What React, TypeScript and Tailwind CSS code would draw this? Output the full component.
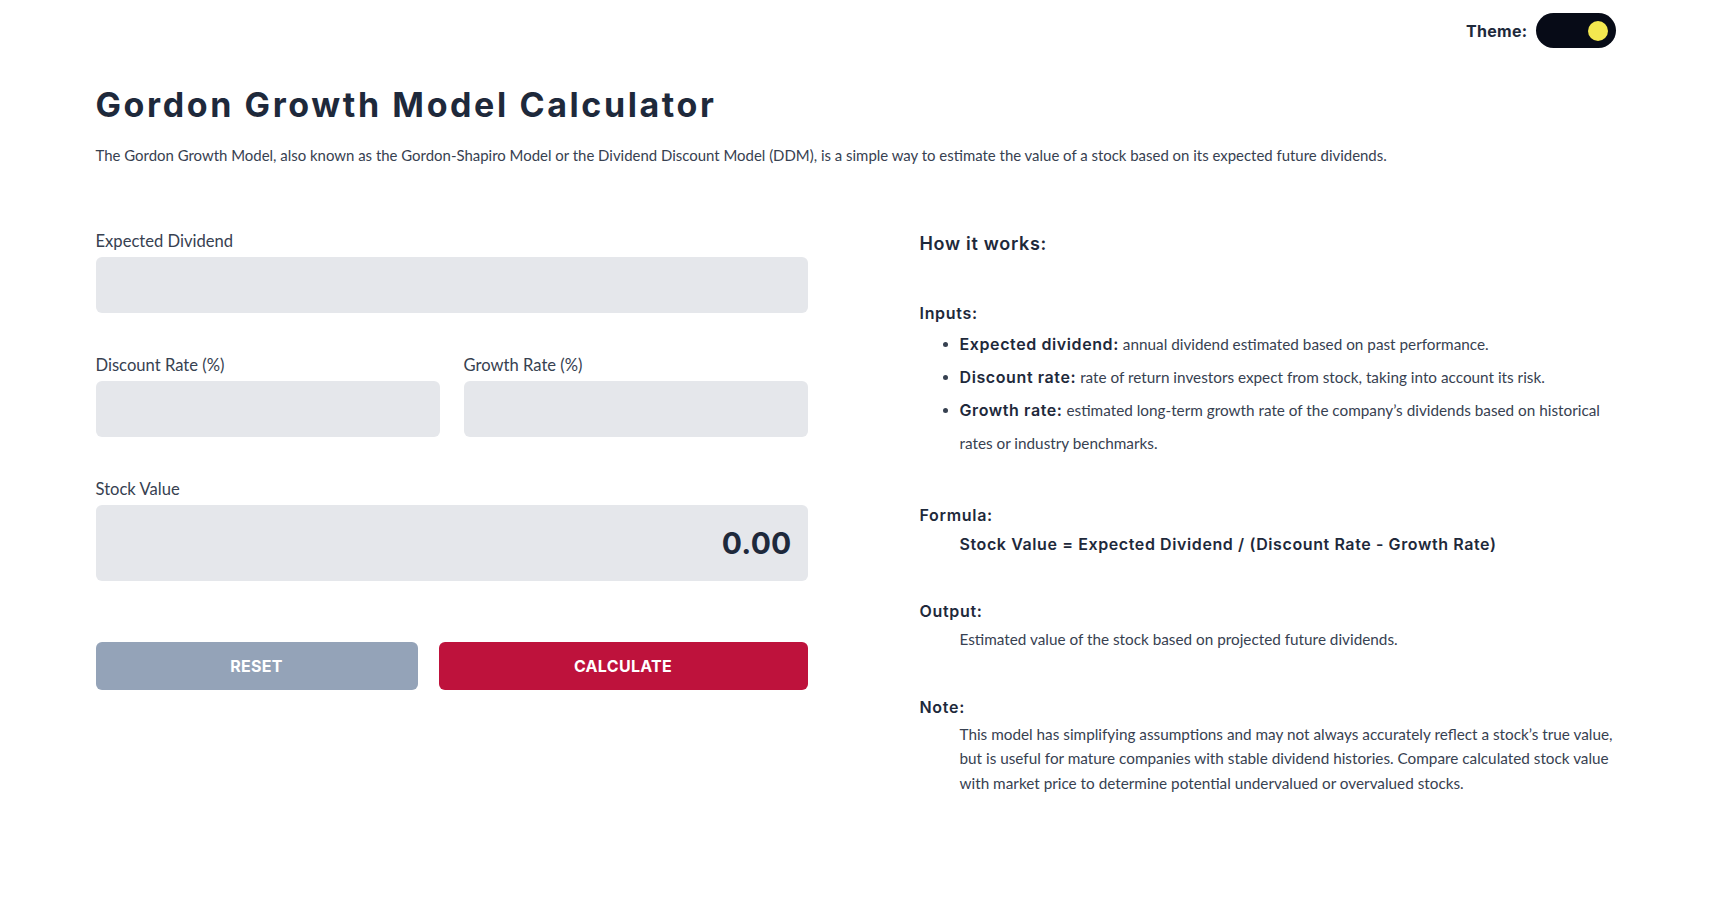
import React from "react";

function Field({ label, tall, value }: { label: string; tall?: boolean; value?: string }) {
  return (
    <div className="flex flex-col">
      <label className="text-[16.6px] leading-6 text-[#374151]">{label}</label>
      {tall ? (
        <div className="mt-1 flex h-[76px] items-center justify-end rounded-md bg-[#e5e7eb] pr-4">
          <span className="[font-family:Inter,sans-serif] text-[30px] font-bold tracking-[0.2px] text-[#1e293b]">
            {value}
          </span>
        </div>
      ) : (
        <input className="mt-1 h-14 w-full rounded-md bg-[#e5e7eb] outline-none" />
      )}
    </div>
  );
}

function Bold({ children }: { children: React.ReactNode }) {
  return (
    <span className="[font-family:Inter,sans-serif] text-[16px] font-semibold tracking-[0.6px] text-[#1e293b]">
      {children}
    </span>
  );
}

function Heading({ children, className }: { children: React.ReactNode; className: string }) {
  return (
    <h3
      className={`[font-family:Inter,sans-serif] text-[16px] font-semibold leading-6 tracking-[0.7px] ${className}`}
    >
      {children}
    </h3>
  );
}

export default function App() {
  return (
    <div className="min-h-screen bg-white [font-family:Lato,'Noto_Sans',sans-serif]">
      <div className="mx-auto max-w-[1536px]">
        <div className="flex items-center justify-end gap-2 pr-4 pt-[13px]">
          <span className="[font-family:Inter,sans-serif] text-[16px] font-bold tracking-[0.3px] text-[#1e293b]">
            Theme:
          </span>
          <button className="flex h-[35px] w-[80px] items-center justify-end rounded-full bg-[#070b17] pr-2">
            <span className="block h-5 w-5 rounded-full bg-[#f3e84f]" />
          </button>
        </div>

        <h1 className="mt-[37px] [font-family:Inter,sans-serif] text-[34px] font-bold leading-10 tracking-[2.6px] text-[#1e293b]">
          Gordon Growth Model Calculator
        </h1>
        <p className="mt-[18px] text-[14.95px] leading-6 text-[#374151]">
          The Gordon Growth Model, also known as the Gordon-Shapiro Model or the Dividend Discount Model (DDM), is a
          simple way to estimate the value of a stock based on its expected future dividends.
        </p>

        <div className="mt-[61px] grid grid-cols-2 gap-[112px]">
          <div className="flex flex-col gap-10 pt-[1px]">
            <Field label="Expected Dividend" />
            <div className="grid grid-cols-2 gap-6">
              <Field label="Discount Rate (%)" />
              <Field label="Growth Rate (%)" />
            </div>
            <Field label="Stock Value" tall value="0.00" />
            <div className="mt-[21px] flex gap-[21px]">
              <button className="h-12 w-[322px] rounded-md bg-[#94a3b8] [font-family:Inter,sans-serif] text-[16px] font-bold tracking-[0.3px] text-white">
                RESET
              </button>
              <button className="h-12 flex-1 rounded-md bg-[#be123c] [font-family:Inter,sans-serif] text-[16px] font-bold tracking-[0.3px] text-white">
                CALCULATE
              </button>
            </div>
          </div>

          <div className="pt-[2px] text-[#1e293b]">
            <h2 className="[font-family:Inter,sans-serif] text-[18px] font-semibold leading-7 tracking-[0.7px]">
              How it works:
            </h2>

            <Heading className="mt-[43px]">Inputs:</Heading>
            <ul className="mt-[3px] list-disc pl-10 text-[15.3px] leading-[33px] text-[#374151]">
              <li>
                <Bold>Expected dividend:</Bold> annual dividend estimated based on past performance.
              </li>
              <li>
                <Bold>Discount rate:</Bold> rate of return investors expect from stock, taking into account its risk.
              </li>
              <li>
                <Bold>Growth rate:</Bold> estimated long-term growth rate of the company’s dividends based on
                historical rates or industry benchmarks.
              </li>
            </ul>

            <Heading className="mt-[43px]">Formula:</Heading>
            <p className="mt-[3px] pl-10 [font-family:Inter,sans-serif] text-[16px] font-semibold leading-7 tracking-[0.6px]">
              Stock Value = Expected Dividend / (Discount Rate - Growth Rate)
            </p>

            <Heading className="mt-[41px]">Output:</Heading>
            <p className="mt-1 pl-10 text-[15.3px] leading-6 text-[#374151]">
              Estimated value of the stock based on projected future dividends.
            </p>

            <Heading className="mt-[44px]">Note:</Heading>
            <p className="mt-[3px] pl-10 text-[15.3px] leading-[24.3px] text-[#374151]">
              This model has simplifying assumptions and may not always accurately reflect a stock’s true value, but is
              useful for mature companies with stable dividend histories. Compare calculated stock value with market
              price to determine potential undervalued or overvalued stocks.
            </p>
          </div>
        </div>
      </div>
    </div>
  );
}
